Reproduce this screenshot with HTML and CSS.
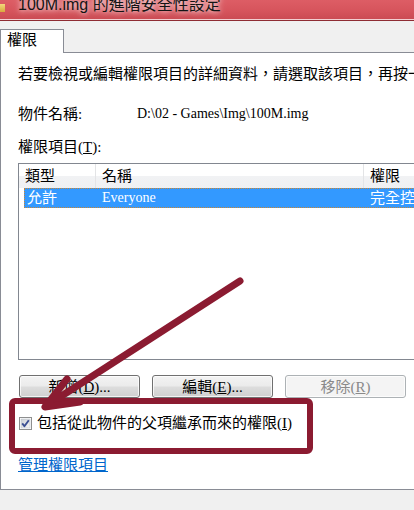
FILE: index.html
```html
<!DOCTYPE html>
<html lang="zh-Hant">
<head>
<meta charset="utf-8">
<title>100M.img 的進階安全性設定</title>
<link rel="stylesheet" href="styles.css">
</head>
<body>
<div class="titlebar">
  <span class="folder"></span>
  <span class="title">100M.img 的進階安全性設定</span>
</div>
<div class="tabs">
  <div class="tab">權限</div>
  <div class="tabfill"></div>
</div>
<div class="panel">
  <p class="intro">若要檢視或編輯權限項目的詳細資料，請選取該項目，再按一下 [編輯]。</p>
  <div class="objrow"><span class="objlabel">物件名稱:</span><span class="lat">D:\02 - Games\Img\100M.img</span></div>
  <div class="listlabel">權限項目(<u>T</u>):</div>
  <div class="listbox">
    <div class="lhead">
      <div class="c1">類型</div>
      <div class="c2">名稱</div>
      <div class="c3">權限</div>
    </div>
    <div class="lrow">
      <div class="c1">允許</div>
      <div class="c2 lat">Everyone</div>
      <div class="c3">完全控制</div>
    </div>
  </div>
  <div class="buttons">
    <button class="btn">新增(<u>D</u>)...</button>
    <button class="btn">編輯(<u>E</u>)...</button>
    <button class="btn" disabled>移除(<u>R</u>)</button>
  </div>
  <label class="inherit">
    <span class="cb"><svg width="13" height="13" viewBox="0 0 13 13"><defs><linearGradient id="cbg" x1="0" y1="0" x2="1" y2="1"><stop offset="0" stop-color="#cbcfd5"/><stop offset="1" stop-color="#f7f7f7"/></linearGradient></defs><rect x="0.5" y="0.5" width="12" height="12" fill="#fff" stroke="#8e8f8f"/><rect x="2" y="2" width="9" height="9" fill="url(#cbg)" stroke="#b9bec6" stroke-width="0.5"/><path d="M3.2 6.4 L5.4 9.2 L9.8 3.2" fill="none" stroke="#3b4f93" stroke-width="1.9" stroke-linejoin="round"/></svg></span>
    <span>包括從此物件的父項繼承而來的權限(<u>I</u>)</span>
  </label>
  <a class="link" href="#">管理權限項目</a>
</div>
<svg class="annot" width="414" height="510" viewBox="0 0 414 510">
  <rect x="12" y="401" width="298" height="50" rx="3" fill="none" stroke="#8b1b31" stroke-width="6"/>
  <line x1="240" y1="281" x2="46" y2="406" stroke="#8b1b31" stroke-width="7" stroke-linecap="round"/>
  <polyline points="67,379 45,407 80,402" fill="none" stroke="#8b1b31" stroke-width="7" stroke-linecap="round" stroke-linejoin="round"/>
</svg>
</body>
</html>
```
FILE: styles.css
```css
html, body {
  margin: 0;
  padding: 0;
}
body {
  width: 414px;
  height: 510px;
  overflow: hidden;
  position: relative;
  background: #f0f0f0;
  font-family: "Liberation Serif", "Noto Sans CJK TC", serif;
  font-size: 15px;
  color: #000;
}
.titlebar {
  height: 20px;
  box-sizing: border-box;
  height: 21px;
  display: flex;
  align-items: flex-start;
  background: linear-gradient(#dd5d65 0%, #d6545c 55%, #c94a52 100%);
  border-bottom: 1px solid #8e2c33;
  box-shadow: inset 0 -1px 0 #f3cfd1;
  overflow: hidden;
}
.folder {
  width: 5px;
  height: 8px;
  margin-top: 4px;
  background: linear-gradient(#f3d77c, #d9a93e);
  flex: none;
}
.title {
  margin-left: 13px;
  margin-top: -3px;
  font-family: "Liberation Sans", "Noto Sans CJK TC", sans-serif;
  font-size: 16px;
  line-height: 16px;
  color: #141414;
  white-space: nowrap;
  text-shadow: 0 0 5px rgba(255,255,255,0.9), 0 0 9px rgba(255,255,255,0.6);
}
.tabs {
  display: flex;
  margin-top: 8px;
  height: 24px;
}
.tab {
  width: 64px;
  box-sizing: border-box;
  height: 24px;
  background: #fff;
  border: 1px solid #898c95;
  border-bottom: none;
  padding-left: 6px;
  line-height: 21px;
}
.tabfill {
  flex: 1;
  border-bottom: 1px solid #898c95;
}
.panel {
  background: #fff;
  border-left: 1px solid #898c95;
  border-bottom: 1px solid #898c95;
  padding: 11px 0 14px 17px;
}
.intro {
  margin: 0;
  line-height: 20px;
  white-space: nowrap;
}
.objrow {
  margin-top: 20px;
  display: flex;
  line-height: 20px;
  white-space: nowrap;
}
.objlabel {
  width: 119px;
  flex: none;
}
.lat {
  font-family: "Liberation Serif", serif;
  font-size: 14px;
}
.listlabel {
  margin-top: 13px;
  line-height: 20px;
}
.listbox {
  margin-top: 6px;
  margin-right: -40px;
  height: 197px;
  box-sizing: border-box;
  border: 1px solid #828790;
  background: #fff;
}
.lhead {
  display: flex;
  height: 24px;
  background: linear-gradient(#ffffff 0%, #ffffff 48%, #f1f2f4 52%, #eff0f2 100%);
  white-space: nowrap;
}
.lhead > div {
  box-sizing: border-box;
  line-height: 24px;
  padding-left: 6px;
}
.lhead .c1 { width: 77px; border-right: 1px solid #e3e4e6; }
.lhead .c2 { width: 268px; border-right: 1px solid #e3e4e6; }
.lhead .c3 { flex: 1; }
.lrow {
  display: flex;
  margin-left: 5px;
  height: 20px;
  box-sizing: border-box;
  background: #3399ff;
  border: 1px dotted #c98532;
  color: #fff;
  white-space: nowrap;
}
.lrow > div {
  box-sizing: border-box;
  line-height: 18px;
}
.lrow .c1 { width: 77px; padding-left: 2px; }
.lrow .c2 { width: 268px; }
.lrow .c3 { flex: 1; }
.buttons {
  margin-top: 15px;
  margin-left: 1px;
  display: flex;
  gap: 12px;
}
.btn {
  width: 121px;
  height: 23px;
  padding: 0;
  box-sizing: border-box;
  border: 1px solid #707070;
  border-radius: 3px;
  background: linear-gradient(#f3f3f3 0%, #ebebeb 48%, #dddddd 52%, #cfcfcf 100%);
  box-shadow: inset 0 0 0 1px rgba(255,255,255,0.75);
  font: inherit;
  line-height: 20px;
  color: #000;
  text-align: center;
}
.btn:disabled {
  border-color: #adb2b5;
  background: #f4f4f4;
  color: #8a8a8a;
}
.inherit {
  margin-top: 15px;
  margin-left: 1px;
  display: flex;
  align-items: center;
  gap: 5px;
  height: 20px;
  line-height: 20px;
  white-space: nowrap;
}
.cb {
  width: 13px;
  height: 13px;
  display: block;
  flex: none;
}
.cb svg { display: block; }
.link {
  display: block;
  width: fit-content;
  margin-top: 22px;
  line-height: 20px;
  color: #0066cc;
  text-decoration: underline;
}
.annot {
  position: absolute;
  left: 0;
  top: 0;
  pointer-events: none;
}
```
